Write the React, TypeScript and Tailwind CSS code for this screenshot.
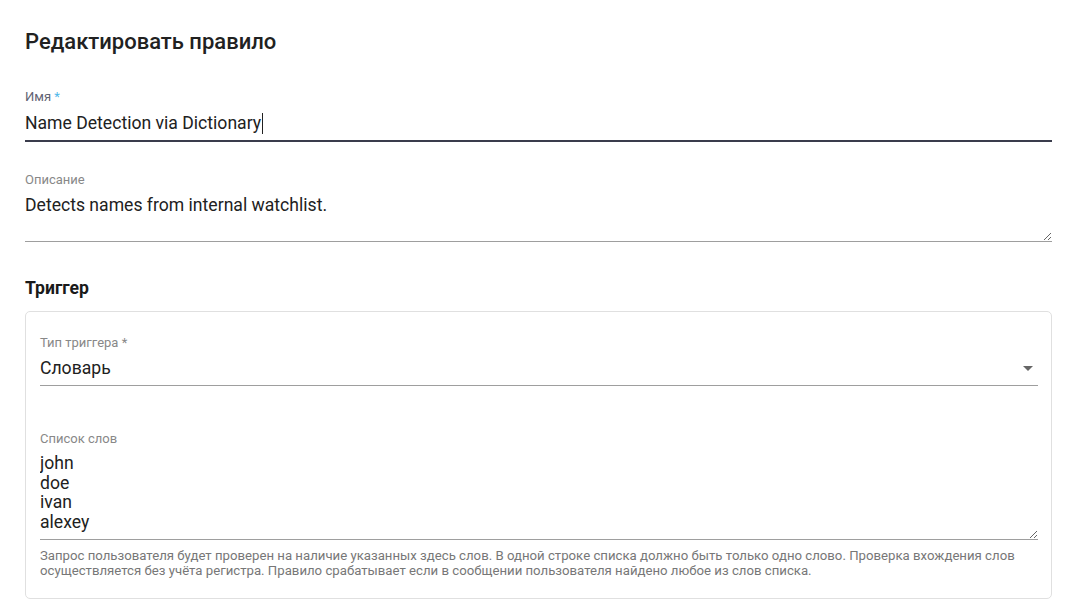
import React from 'react';

export default function App() {
  return (
    <div className="min-h-screen bg-white pl-[25px] pr-[27px] pt-[28px] font-['Roboto',sans-serif] text-[#212121]">
      <h2 className="text-[22px] leading-[28px] font-medium">Редактировать правило</h2>

      {/* Name */}
      <div className="mt-[34px]">
        <label className="block text-[13px] leading-[14px] text-[#5f6373]">
          Имя <span className="text-[#4fb8ea]">*</span>
        </label>
        <div className="mt-[7px] flex items-center border-b-2 border-[#3a3c4c] pb-[5px] text-[17.6px] leading-[24px]">
          <span>Name Detection via Dictionary</span>
          <span className="ml-[1px] inline-block h-[21px] w-[1px] bg-[#212121]" />
        </div>
      </div>

      {/* Description */}
      <div className="mt-[31px]">
        <label className="block text-[13px] leading-[14px] text-[#888]">Описание</label>
        <textarea
          className="mt-[6px] block h-[49px] w-full resize-y border-0 border-b border-[#9e9e9e] p-0 text-[17.6px] leading-[24px] text-[#212121] outline-none"
          defaultValue="Detects names from internal watchlist."
        />
      </div>

      <h3 className="mt-[36px] text-[17.6px] leading-[20px] font-bold text-[#1a1a1a]">Триггер</h3>

      <div className="mt-[13px] rounded-[5px] border border-[#e0e0e0] pl-[14px] pr-[13px] pt-[24px] pb-[20px]">
        {/* Trigger type */}
        <label className="block text-[13px] leading-[14px] text-[#888]">Тип триггера *</label>
        <div className="mt-[6px] flex items-center justify-between border-b border-[#9e9e9e] pb-[5px] text-[17.6px] leading-[24px]">
          <span>Словарь</span>
          <svg width="10" height="5" viewBox="0 0 10 5" className="mr-[5px]">
            <path d="M0 0h10L5 5z" fill="#666" />
          </svg>
        </div>

        {/* Word list */}
        <label className="mt-[46px] block text-[13px] leading-[14px] text-[#888]">Список слов</label>
        <textarea
          className="mt-[8px] block h-[86px] w-full resize-y border-0 border-b border-[#9e9e9e] p-0 text-[17.6px] leading-[19.5px] text-[#212121] outline-none"
          defaultValue={'john\ndoe\nivan\nalexey'}
        />
        <p className="mt-[8px] text-[13.2px] leading-[15px] text-[#777]">
          Запрос пользователя будет проверен на наличие указанных здесь слов. В одной строке списка должно быть только одно слово. Проверка вхождения слов осуществляется без учёта регистра. Правило срабатывает если в сообщении пользователя найдено любое из слов списка.
        </p>
      </div>
    </div>
  );
}
